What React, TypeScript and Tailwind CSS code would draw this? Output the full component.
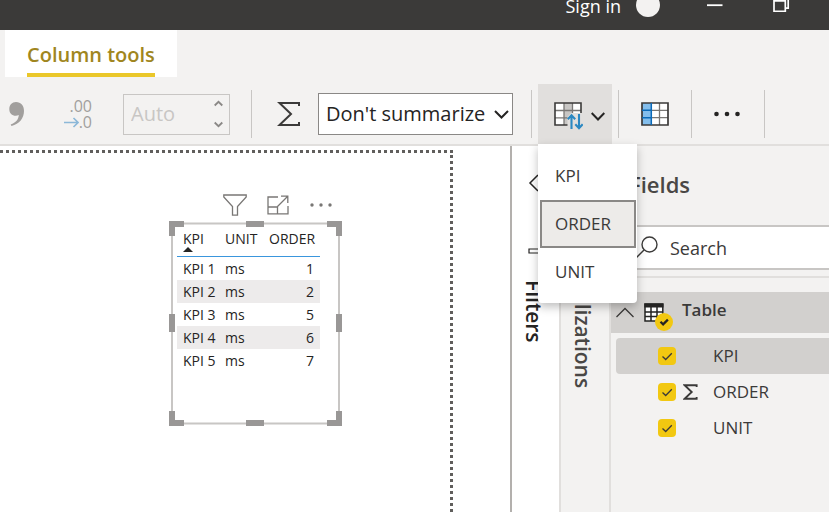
import { ReactNode, useState } from "react";
import classNames from "clsx";

type Row = { kpi: string; unit: string; order: number };

const rows: Row[] = [
  { kpi: "KPI 1", unit: "ms", order: 1 },
  { kpi: "KPI 2", unit: "ms", order: 2 },
  { kpi: "KPI 3", unit: "ms", order: 5 },
  { kpi: "KPI 4", unit: "ms", order: 6 },
  { kpi: "KPI 5", unit: "ms", order: 7 },
];

const columns = ["KPI", "ORDER", "UNIT"];

function TitleBar() {
  return (
    <header className="flex h-[30px] items-start justify-end overflow-hidden bg-[#3b3a39] text-white">
      <button className="-mt-2 h-7 text-lg leading-7">Sign in</button>
      <span className="-mt-[7px] ml-[15px] size-6 rounded-full bg-[#f3f2f1]" />
      <button aria-label="Minimize" className="ml-[46px] h-3">
        <svg width="18" height="12" viewBox="0 0 18 12" stroke="#fff" strokeWidth="1.8">
          <path d="M1 5.2h15.5" />
        </svg>
      </button>
      <button aria-label="Restore" className="mr-[38px] ml-[49px] h-3">
        <svg width="18" height="12" viewBox="0 0 18 12" fill="none" stroke="#fff" strokeWidth="1.7">
          <path d="M1 -3H12.3V11.3H1zM1 .8H12M12.3 8.2H15.2V-4" />
        </svg>
      </button>
    </header>
  );
}

function Separator({ className }: { className?: string }) {
  return <span className={classNames("h-12 w-px shrink-0 bg-[#c8c6c4]", className)} />;
}

function Sigma({ className, thin }: { className?: string; thin?: boolean }) {
  return (
    <svg className={className} viewBox="0 0 24 26" fill="none" stroke="#3b3a39" strokeWidth={thin ? 2 : 3}>
      <path d="M22 5V2H2.5L14 13 2.5 24H22V21" />
    </svg>
  );
}

function SortByColumn() {
  const [selected, setSelected] = useState("ORDER");
  return (
    <div className="relative ml-1.5 h-[60px] w-[74px] shrink-0">
      <button
        aria-label="Sort by column"
        aria-haspopup="menu"
        aria-expanded="true"
        className="flex size-full items-center gap-2 bg-[#e1dfdd] pt-1 pl-4"
      >
        <svg width="29" height="28" viewBox="0 0 29 28" fill="none">
          <path d="M1 1h26v22H1z" fill="#fff" />
          <path d="M10 1h8v22h-8z" fill="#c8c6c4" />
          <path d="M1 8.5h26M1 15.8h26M10 1v22M18.5 1v22" stroke="#797775" strokeWidth="1.3" />
          <path d="M1 1h26v22H1z" stroke="#3b3a39" strokeWidth="1.6" />
          <path d="M13.5 15 17 11h12v17H13.5z" fill="#e1dfdd" />
          <path
            d="M17.5 27V13.5M13.8 17.2l3.7-3.9 3.7 3.9M25 12V26M21.300 22.300l3.700 3.900 3.700-3.900"
            stroke="#2b88c2"
            strokeWidth="2.1"
          />
        </svg>
        <svg width="14" height="9" viewBox="0 0 14 9" fill="none" stroke="#252423" strokeWidth="2">
          <path d="M.7 1 7 7.5 13.3 1" />
        </svg>
      </button>
      <div
        role="menu"
        className="absolute top-full left-0 z-10 flex w-[99px] flex-col rounded-b-sm bg-white pt-2 pr-px pb-[7px] pl-0.5 text-[17px] shadow-[0_4px_10px_rgba(0,0,0,0.25)]"
      >
        {["KPI", "ORDER", "UNIT"].map((name) => (
          <button
            key={name}
            role="menuitem"
            onClick={() => setSelected(name)}
            className={classNames(
              "h-12 border-2 pl-[13px] text-left text-[#3b3a39]",
              selected === name ? "border-[#8a8886] bg-[#edebe9]" : "border-transparent",
            )}
          >
            {name}
          </button>
        ))}
      </div>
    </div>
  );
}

function Ribbon() {
  return (
    <div className="flex h-[69px] items-center border-b-2 border-[#e1dfdd] bg-[#f3f2f1] pt-[7px]">
      <button aria-label="Thousands separator" className="ml-[9px] shrink-0">
        <svg width="16" height="26" viewBox="0 0 16 26" fill="#a19f9d">
          <path d="M7 1c5 0 8 3.5 8 9 0 7-4.500 13-12.500 15l-.8-1.500C7 21.500 9.500 18.500 9.800 14c-1 .6-2 .8-3 .8C3 14.800.3 12 .3 8.200.3 4 3 1 7 1z" />
        </svg>
      </button>
      <div className="ml-9 w-[31px] shrink-0 text-right text-base leading-4 text-[#a19f9d]">
        <div>.00</div>
        <div className="flex items-center justify-end">
          <svg width="15" height="11" viewBox="0 0 15 11" fill="none" stroke="#8cb8d8" strokeWidth="1.6">
            <path d="M0 5.500h14M9.500 1l4.500 4.500-4.500 4.500" />
          </svg>
          <span>.0</span>
        </div>
      </div>
      <div className="ml-[31px] flex h-[41px] w-[107px] shrink-0 items-center border border-[#c8c6c4] pr-1.5">
        <input
          aria-label="Decimal places"
          defaultValue="Auto"
          disabled
          className="w-full min-w-0 bg-transparent pl-[7px] text-xl text-[#c8c6c4]"
        />
        <svg className="shrink-0" width="9" height="28" viewBox="0 0 9 28" fill="none" stroke="#8a8886" strokeWidth="1.8">
          <path d="M.7 5.500 4.500 1.800 8.300 5.500M.7 22.500l3.800 3.700 3.800-3.700" />
        </svg>
      </div>
      <Separator className="ml-[21px]" />
      <Sigma className="ml-[25px] h-[26px] w-6 shrink-0" thin />
      <div className="relative ml-[17px] h-[42px] w-[195px] shrink-0">
        <select
          aria-label="Summarization"
          className="size-full appearance-none border border-[#8a8886] bg-white pl-[7px] text-xl text-[#252423]"
        >
          <option>Don't summarize</option>
        </select>
        <svg
          className="pointer-events-none absolute top-[17px] right-1"
          width="15"
          height="10"
          viewBox="0 0 15 10"
          fill="none"
          stroke="#252423"
          strokeWidth="2"
        >
          <path d="M1 1l6.500 6.500L14 1" />
        </svg>
      </div>
      <Separator className="ml-[18px]" />
      <SortByColumn />
      <Separator className="ml-1.5" />
      <button aria-label="Data groups" className="ml-[22px] shrink-0">
        <svg width="28" height="24" viewBox="0 0 28 24" fill="none">
          <path d="M1 1h26v22H1z" fill="#fff" />
          <path d="M1 1h9.500v22H1z" fill="#83beec" />
          <path d="M10 8.300h17M10 15.700h17M18.500 1v22" stroke="#797775" strokeWidth="1.300" />
          <path d="M1 1h26v22H1z" stroke="#3b3a39" strokeWidth="1.700" />
          <path d="M10.300 1v22M1 8.300h9.300M1 15.700h9.300" stroke="#0b6ab8" strokeWidth="1.500" />
        </svg>
      </button>
      <Separator className="ml-[22px]" />
      <button aria-label="More options" className="ml-[21px] shrink-0">
        <svg width="28" height="6" viewBox="0 0 28 6" fill="#252423">
          <circle cx="3.500" cy="3" r="2.300" />
          <circle cx="14" cy="3" r="2.300" />
          <circle cx="24.500" cy="3" r="2.300" />
        </svg>
      </button>
      <Separator className="ml-[23px]" />
    </div>
  );
}

function ResizeFrame() {
  return (
    <svg className="pointer-events-none absolute inset-0 size-full" viewBox="0 0 173 205" preserveAspectRatio="none">
      <path d="M3 2.500H170V202.500H3z" fill="none" stroke="#c8c6c4" strokeWidth="2" />
      <path
        d="M0 0h15v6H6v9H0zM158 0h15v15h-6V6h-9zM0 205v-15h6v9h9v6zM173 205v-15h-6v9h-9v6zM77 0h18v6H77zM77 199h18v6H77zM0 93h6v18H0zM167 93h6v18h-6z"
        fill="#999796"
      />
    </svg>
  );
}

function TableVisual() {
  return (
    <div className="absolute top-[68px] left-[169px] h-[205px] w-[173px]">
      <div className="absolute -top-[27px] right-[9px] flex items-center gap-5">
        <button aria-label="Filters">
          <svg width="24" height="22" viewBox="0 0 24 22" fill="none" stroke="#797775" strokeWidth="1.3">
            <path d="M.8 1H23.200V3L14.500 12.500V21.200H9.500V12.500L.8 3z" />
          </svg>
        </button>
        <button aria-label="Focus mode">
          <svg width="22" height="20" viewBox="0 0 22 20" fill="none" stroke="#797775" strokeWidth="1.3">
            <path d="M11 2H1V18.800H21V11M1 12H10.500V18.800M10.500 11.500 20.500 1.500M14 1.200H20.800V8" />
          </svg>
        </button>
        <button aria-label="More options">
          <svg width="24" height="6" viewBox="0 0 24 6" fill="#797775">
            <circle cx="3" cy="3" r="1.700" />
            <circle cx="12" cy="3" r="1.700" />
            <circle cx="21" cy="3" r="1.700" />
          </svg>
        </button>
      </div>
      <ResizeFrame />
      <table className="mt-2 ml-2 w-[143px] table-fixed border-separate border-spacing-0 text-sm leading-5 text-[#252423]">
        <colgroup>
          <col className="w-[43px]" />
          <col className="w-11" />
          <col className="w-14" />
        </colgroup>
        <thead>
          <tr className="h-7 align-top">
            <th className="border-b border-[#3a96dd] pl-1.5 text-left font-normal">
              <span className="block h-[18px] leading-5">KPI</span>
              <svg width="10" height="5" viewBox="0 0 10 5" fill="#252423">
                <path d="M0 5 5 0l5 5z" />
              </svg>
            </th>
            <th className="border-b border-[#3a96dd] pl-[5px] text-left font-normal">UNIT</th>
            <th className="border-b border-[#3a96dd] pl-[5px] text-left font-normal">ORDER</th>
          </tr>
        </thead>
        <tbody>
          {rows.map((row) => (
            <tr key={row.kpi} className="h-[23px] even:bg-[#edebeb]">
              <td className="pl-1.5 whitespace-nowrap">{row.kpi}</td>
              <td className="pl-[5px]">{row.unit}</td>
              <td className="pr-1.5 text-right">{row.order}</td>
            </tr>
          ))}
        </tbody>
      </table>
    </div>
  );
}

function Canvas() {
  return (
    <main className="flex min-w-0 flex-1 flex-col bg-white pt-1 pr-[57px]">
      <div className="relative flex-1 border-t-3 border-r-3 border-dotted border-[#605e5c]">
        <TableVisual />
      </div>
    </main>
  );
}

function CollapsedPane({ title, className, children }: { title: string; className: string; children?: ReactNode }) {
  return (
    <aside className={classNames("flex shrink-0 flex-col items-center", className)}>
      {children}
      <h2 className="text-[21px] leading-7 font-semibold [writing-mode:vertical-rl]">{title}</h2>
    </aside>
  );
}

function FieldsPane() {
  return (
    <aside className="flex w-[220px] shrink-0 flex-col border-l-2 border-[#e1dfdd] bg-[#f3f2f1]">
      <h2 className="pt-[22px] pl-[18px] text-[22px] leading-8 font-semibold text-[#494745]">Fields</h2>
      <label className="mt-[25px] ml-3 flex h-[45px] items-center gap-3 border-y-2 border-l-2 border-[#c8c6c4] bg-white pl-[9px]">
        <svg className="shrink-0" width="24" height="24" viewBox="0 0 24 24" fill="none" stroke="#3b3a39" strokeWidth="1.4">
          <circle cx="15.500" cy="8.500" r="7.500" />
          <path d="M10 14 1 23" />
        </svg>
        <input aria-label="Search" placeholder="Search" className="w-full min-w-0 text-lg placeholder:text-[#3b3a39]" />
      </label>
      <div className="mt-1.5 border-t-2 border-[#e1dfdd] pt-3.5">
        <div className="flex h-[41px] items-center bg-[#d2d0ce] pl-1">
          <button aria-label="Collapse table">
            <svg width="20" height="11" viewBox="0 0 20 11" fill="none" stroke="#3b3a39" strokeWidth="1.3">
              <path d="M1.500 10 10 1.500 18.500 10" />
            </svg>
          </button>
          <svg className="mt-2 ml-[9px] shrink-0" width="30" height="28" viewBox="0 0 30 28" fill="none">
            <path d="M1 1h18v17H1z" fill="#fff" />
            <path d="M.3 .5h19.200v4H.3z" fill="#252423" />
            <path d="M1 1h17.800v17H1zM1 9h18M1 13.500h18M7 4v14M13 4v14" stroke="#252423" strokeWidth="1.500" />
            <circle cx="20" cy="19" r="9" fill="#f2c811" />
            <path d="M16.500 18.800l2.600 2.600 4.800-4.800" stroke="#252423" strokeWidth="2.200" />
          </svg>
          <span className="ml-2 self-start pt-[5px] text-[17px] font-semibold text-[#3b3a39]">Table</span>
        </div>
        <ul className="mt-[5px] ml-[5px]">
          {columns.map((name) => (
            <li key={name} className={classNames("h-9 rounded-l-sm", name === "KPI" && "bg-[#d2d0ce]")}>
              <label className="flex h-full items-center pl-[42px] text-[17px] text-[#3b3a39]">
                <span className="grid size-[18px] shrink-0">
                  <input
                    type="checkbox"
                    defaultChecked
                    className="col-start-1 row-start-1 size-[18px] appearance-none rounded-sm bg-[#f2c811]"
                  />
                  <svg
                    className="pointer-events-none col-start-1 row-start-1"
                    width="18"
                    height="18"
                    viewBox="0 0 18 18"
                    fill="none"
                    stroke="#3b3a39"
                    strokeWidth="1.3"
                  >
                    <path d="M4.500 9.500 7.700 12.500 13.800 6.300" />
                  </svg>
                </span>
                <span className="ml-[7px] w-[30px] shrink-0">
                  {name === "ORDER" && <Sigma className="h-4 w-[15px]" />}
                </span>
                {name}
              </label>
            </li>
          ))}
        </ul>
      </div>
    </aside>
  );
}

export default function App() {
  return (
    <div className="flex min-h-screen flex-col overflow-hidden bg-[#f3f2f1] font-['Open_Sans','Noto_Sans',sans-serif]">
      <TitleBar />
      <nav className="flex h-[47px] pl-[5px]">
        <button className="flex items-end bg-white px-[22px] text-xl font-semibold text-[#a08620]">
          <span className="border-b-4 border-[#eac72a] pb-1">Column tools</span>
        </button>
      </nav>
      <Ribbon />
      <div className="flex flex-1">
        <Canvas />
        <CollapsedPane
          title="Filters"
          className="w-[51px] border-x-2 border-l-[#b3b0ad] border-r-[#e1dfdd] bg-white pt-7 pr-1 text-[#252423]"
        >
          <button aria-label="Expand filters">
            <svg width="12" height="18" viewBox="0 0 12 18" fill="none" stroke="#252423" strokeWidth="1.5">
              <path d="M10 1 2 9l8 8" />
            </svg>
          </button>
          <svg className="mt-14 mb-[26px]" width="12" height="6" viewBox="0 0 12 6" fill="none" stroke="#252423" strokeWidth="1.2">
            <path d="M12 1H1v4h11" />
          </svg>
        </CollapsedPane>
        <CollapsedPane title="Visualizations" className="w-12 bg-[#f3f2f1] pt-[103px] pr-1 text-[#494745]" />
        <FieldsPane />
      </div>
    </div>
  );
}
